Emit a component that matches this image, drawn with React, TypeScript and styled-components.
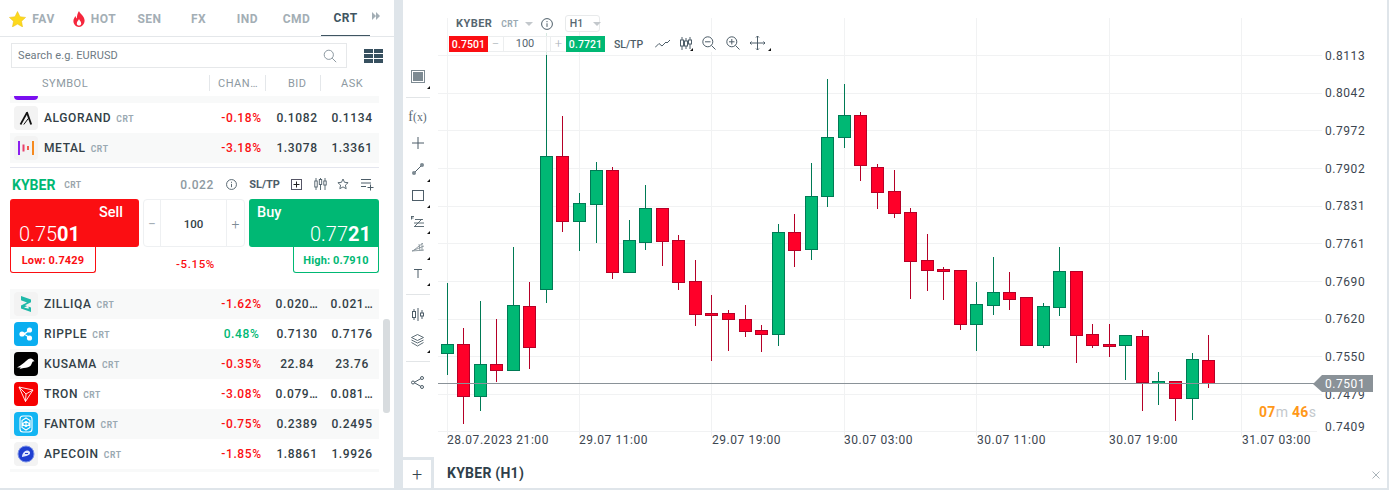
import React from "react";
import styled, { createGlobalStyle } from "styled-components";

const Global = createGlobalStyle`
  html, body { margin: 0; padding: 0; background: #dfe5ea; }
  #root { width: 1389px; height: 490px; overflow: hidden; }
  * { box-sizing: border-box; }
`;

const Page = styled.div`
  display: flex; width: 1389px; height: 490px; padding-bottom: 2px; gap: 9px; padding-right: 2px;
  font-family: Roboto, "Liberation Sans", sans-serif; background: #dfe5ea;
`;
const Side = styled.aside`
  width: 394px; flex: none; background: #fff; display: flex; flex-direction: column; position: relative;
`;
const Tabs = styled.nav`
  display: flex; height: 37px; border-bottom: 1px solid #e4e7ea; flex: none; position: relative;
`;
const Tab = styled.div<{ $w: number; $active?: boolean }>`
  width: ${p => p.$w}px; height: 36px; display: flex; align-items: center; justify-content: center; gap: 6px;
  font-size: 12px; font-weight: 700; letter-spacing: .5px; padding-top: 1px;
  color: ${p => (p.$active ? "#3f5562" : "#a3aeb5")};
  border-bottom: ${p => (p.$active ? "1px solid #3f5562" : "0")};
  margin-bottom: -1px;
  & > svg { flex: none; }
`;
const TabMore = styled.div`
  margin-left: 2px; height: 36px; display: flex; align-items: center; margin-top: -2px;
`;
const SearchRow = styled.div`
  display: flex; align-items: center; height: 31px; padding: 6px 0 0 11px; flex: none;
`;
const SearchBox = styled.div`
  width: 336px; height: 25px; border: 1px solid #e6e8ea; display: flex; align-items: center; justify-content: space-between;
  padding: 0 9px 0 6px; font-size: 11px; color: #6e7a83; letter-spacing: .1px;
`;
const ViewToggle = styled.div`
  margin-left: 17px; display: flex; margin-top: 0;
`;
const HeadRow = styled.div`
  display: flex; margin: 7px 0 5px 10px; height: 16px; flex: none; width: 369px;
  font-size: 11px; color: #8d99a1; letter-spacing: .5px; line-height: 18px;
`;
const HeadCell = styled.div<{ $w: number; $pad: number; $sep?: boolean }>`
  width: ${p => p.$w}px; padding-left: ${p => p.$pad}px;
  border-left: ${p => (p.$sep ? "1px solid #e4e7ea" : "0")}; white-space: nowrap;
`;
const List = styled.div`
  margin-left: 10px; width: 369px; height: 376px; overflow: hidden; flex: none;
`;
const Row = styled.div<{ $alt?: boolean; $clip?: number }>`
  display: grid; grid-template-columns: 204px 55px 56px 54px; align-items: center; height: 30px;
  background: ${p => (p.$alt ? "#f8f9f9" : "#fff")};
  margin-top: ${p => (p.$clip ? -p.$clip : 0)}px;
  font-size: 12px; font-weight: 500; letter-spacing: .62px; color: #333f47;
`;
const NameCell = styled.div`
  display: flex; align-items: center; padding-left: 4px; min-width: 0;
`;
const Logo = styled.div<{ $bg: string }>`
  width: 24px; height: 24px; border-radius: 4px; background: ${p => p.$bg}; flex: none; display: flex;
  align-items: center; justify-content: center; margin-right: 6px;
`;
const Tag = styled.span`
  font-size: 8.5px; font-weight: 700; color: #9aa9b2; margin-left: 5px; letter-spacing: .6px; position: relative; top: .5px;
`;
const Num = styled.div<{ $tone?: "up" | "down" }>`
  text-align: center; white-space: nowrap;
  color: ${p => (p.$tone === "up" ? "#00b874" : p.$tone === "down" ? "#fb0e12" : "inherit")};
`;
const Detail = styled.section`
  height: 122px; margin: 4px 0 0; border-top: 1px solid #e4e6ee; background: #fff;
`;
const DetailHead = styled.div`
  height: 31px; display: flex; align-items: center; position: relative; padding: 3px 0 0 2px;
`;
const Kyber = styled.span`
  font-size: 14px; font-weight: 700; color: #00b874;
`;
const KTag = styled.span`
  font-size: 8.5px; font-weight: 700; color: #9aa5ac; margin-left: 9px; letter-spacing: .3px;
`;
const Spread = styled.span`
  margin-left: 99px; width: 30px; font-size: 12px; font-weight: 500; color: #8d99a1; letter-spacing: .6px;
`;
const DetailTools = styled.div`
  margin-left: 16px; display: flex; align-items: center; height: 16px; margin-top: -2px;
`;
const SlTp = styled.span<{ $ml?: number }>`
  margin-left: ${p => p.$ml ?? 12}px; font-size: 11px; font-weight: 700; color: #4d5d68; letter-spacing: -.05px;
`;
const IconSlot = styled.span<{ $ml: number }>`
  margin-left: ${p => p.$ml}px; display: inline-flex;
`;
const Trade = styled.div`
  display: flex; height: 48px;
`;
const PriceBtn = styled.div<{ $buy?: boolean }>`
  width: ${p => (p.$buy ? 130 : 129)}px; height: 48px; border-radius: 3px 3px ${p => (p.$buy ? "0 3px" : "3px 0")};
  background: ${p => (p.$buy ? "#00b874" : "#fb0e12")}; color: #fff; padding: 4px 8px 0 8px;
  display: flex; flex-direction: column; align-items: ${p => (p.$buy ? "flex-start" : "flex-end")};
  ${p => (p.$buy ? "" : "padding-right: 16px; padding-left: 9px;")}
`;
const BtnLabel = styled.div`
  font-size: 14.5px; font-weight: 500; line-height: 20px;
`;
const BtnPrice = styled.div<{ $buy?: boolean }>`
  font-size: 20px; font-weight: 300; line-height: 22px; white-space: nowrap;
  align-self: ${p => (p.$buy ? "flex-end" : "flex-start")};
  & > b { font-weight: 700; }
`;
const Stepper = styled.div`
  margin: 0 4px; width: 102px; height: 48px; border: 1px solid #eef0f2; border-radius: 4px; display: grid;
  grid-template-columns: 16px 1fr 17px; align-items: stretch;
`;
const StepBtn = styled.div`
  display: flex; align-items: center; justify-content: center; color: #7d8b95; font-size: 14px; font-weight: 300; padding-top: 1px;
`;
const StepVal = styled.div`
  border-left: 1px solid #eef0f2; border-right: 1px solid #eef0f2; display: flex; align-items: center; justify-content: center;
  font-size: 11.5px; font-weight: 500; color: #333f47; padding-top: 1px;
`;
const Stats = styled.div`
  display: flex; align-items: flex-start; justify-content: space-between; height: 26px;
`;
const StatBox = styled.div<{ $up?: boolean }>`
  width: 86px; height: 26px; border: 1px solid ${p => (p.$up ? "#00b874" : "#fb0e12")}; border-top: 0; border-radius: 0 0 3px 3px;
  display: flex; align-items: center; justify-content: center; font-size: 11px; font-weight: 700; letter-spacing: .15px;
  color: ${p => (p.$up ? "#00b874" : "#fb0e12")}; padding-top: 1px;
`;
const DayChange = styled.div`
  margin-top: 10px; font-size: 11.5px; font-weight: 500; letter-spacing: .6px; color: #fb0e12; width: 60px; text-align: center; margin-left: 2px;
`;
const Scrollbar = styled.div`
  position: absolute; left: 383px; top: 319px; width: 7px; height: 94px; border-radius: 3px; background: #d8dcdf;
`;
const ChartPanel = styled.main`
  width: 984px; flex: none; background: #fff; display: flex; flex-direction: column;
`;
const ChartBody = styled.div`
  flex: 1; display: flex; min-height: 0;
`;
const Tools = styled.div`
  width: 35px; flex: none; padding-top: 63px; display: flex; flex-direction: column; align-items: stretch;
`;
const ToolItem = styled.div<{ $corner?: boolean }>`
  height: 26px; display: flex; align-items: center; justify-content: center; position: relative; padding-right: 6px; flex: none;
  font-family: "Liberation Serif", serif; font-size: 14px; color: #5c6b75;
  ${p => p.$corner ? `&::after { content: ""; position: absolute; right: 8px; bottom: 0; border-style: solid; border-width: 0 0 3px 3px; border-color: transparent transparent #111 transparent; }` : ""}
`;
const ToolSep = styled.div<{ $mb?: number }>`
  height: 1px; background: #e2e5e7; margin: 8px 8px ${p => p.$mb ?? 6}px 3px; flex: none;
`;
const Canvas = styled.div`
  flex: 1; position: relative; min-width: 0;
  & > svg { display: block; }
`;
const Float = styled.div`
  position: absolute; left: 11px; top: 15px; display: flex; flex-direction: column; gap: 4px;
`;
const FloatTop = styled.div`
  display: flex; align-items: center; height: 17px; padding-left: 7px;
`;
const FName = styled.span`
  font-size: 11px; font-weight: 700; color: #56666f; letter-spacing: .45px;
`;
const FTag = styled.span`
  font-size: 8.5px; font-weight: 700; color: #9aa9b2; margin-left: 9px; letter-spacing: .5px;
`;
const Caret = styled.span<{ $ml: number }>`
  margin-left: ${p => p.$ml}px; width: 0; height: 0; border-style: solid; border-width: 4px 4px 0 4px; border-color: #c3c8cc transparent transparent transparent; display: inline-block;
`;
const TfBox = styled.div`
  margin-left: 12px; width: 35px; height: 17px; border: 1px solid #e8eaeb; border-radius: 3px; display: flex; align-items: center; padding-left: 4px;
  font-size: 10.5px; font-weight: 500; color: #56666f; background: #fff;
`;
const FloatBottom = styled.div`
  display: flex; align-items: center; height: 16px; background: #fff;
`;
const MiniPrice = styled.div<{ $buy?: boolean }>`
  width: 39px; height: 16px; background: ${p => (p.$buy ? "#00b874" : "#fb0e12")}; color: #fff; font-size: 10.5px; font-weight: 500;
  display: flex; align-items: center; justify-content: center; letter-spacing: .1px;
`;
const MiniStep = styled.div`
  width: 78px; height: 16px; display: grid; grid-template-columns: 15px 44px 4px 15px; border-top: 1px solid #eceeef; border-bottom: 1px solid #eceeef;
  font-size: 11px; color: #56666f; align-items: center; text-align: center;
`;
const MiniSign = styled.span`
  color: #aab2b8; font-size: 13px; font-weight: 300; line-height: 14px;
`;
const MiniVal = styled.span`
  border-left: 1px solid #eceeef; border-right: 1px solid #eceeef; line-height: 14px;
`;
const MiniGap = styled.span`
  border-right: 1px solid #eceeef; height: 14px;
`;
const FSlTp = styled.span`
  margin-left: 9px; font-size: 10.5px; color: #4d5d68; font-weight: 500; letter-spacing: 0; width: 41px;
`;
const BottomBar = styled.footer`
  height: 31px; flex: none; display: flex; align-items: stretch; position: relative;
`;
const AddTab = styled.div`
  width: 31px; border-top: 3px solid #dfe5ea; border-right: 3px solid #dfe5ea; display: flex; align-items: center; justify-content: center;
  font-size: 18px; font-weight: 300; color: #37474f;
`;
const BarTitle = styled.div`
  margin-left: 13px; font-size: 14px; font-weight: 700; color: #2f3f4a; display: flex; align-items: center; letter-spacing: .25px; padding-top: 1px;
`;
const CloseX = styled.div`
  position: absolute; right: 7px; top: 14px; display: flex;
`;
const AxisLabel = styled.text`
  font-family: Roboto, "Liberation Sans", sans-serif; font-size: 12px; fill: #3c4650; letter-spacing: .55px;
`;
const TagLabel = styled(AxisLabel)`
  fill: #fff;
`;
const TimerText = styled.text`
  font-family: Roboto, "Liberation Sans", sans-serif; font-size: 14px; font-weight: 700; fill: #ff9819; letter-spacing: .3px;
  & > tspan { fill: #c3c8cc; font-weight: 400; }
`;

type C = [number, number, number, number, number, number];
// x, wickTop, wickBottom, bodyTop, bodyBottom, up=1/down=0
const candles: C[] = [
  [447.5,283,375,344,354,1],[463.5,328,424,344,397,0],[480.5,301,411,364,397,1],[496.5,319,382,364,371,0],
  [513.5,247,371,305,371,1],[529.5,282,369,306,348,0],[546.5,55,303,156,290,1],[562.5,116,232,156,222,0],
  [579.5,193,251,203,222,1],[596.5,162,243,170,205,1],[612.5,167,279,170,273,0],[629.5,220,273,240,273,1],
  [645.5,185,250,208,243,1],[662.5,208,266,208,242,0],[678.5,235,290,240,283,0],[695.5,260,326,281,315,0],
  [711.5,295,361,313,316,0],[728.5,310,351,313,320,0],[745.5,305,337,319,332,0],[761.5,325,352,330,335,0],
  [778.5,224,346,232,335,1],[794.5,214,267,232,251,0],[811.5,163,260,196,250,1],[827.5,79,207,137,197,1],
  [844.5,84,148,115,138,1],[860.5,112,181,115,166,0],[877.5,164,209,167,193,0],[894.5,170,218,191,214,0],
  [910.5,208,299,212,262,0],[927.5,234,291,260,271,0],[943.5,267,300,269,272,0],[960.5,270,330,270,325,0],
  [976.5,282,351,304,325,1],[993.5,257,315,292,306,1],[1009.5,272,310,292,300,0],[1026.5,297,346,297,346,0],
  [1043.5,303,348,306,346,1],[1059.5,247,316,271,308,1],[1076.5,271,363,271,336,0],[1092.5,324,348,334,346,0],
  [1109.5,324,357,344,347,0],[1125.5,335,380,335,346,1],[1142.5,330,411,336,383,0],[1158.5,372,405,381,384,1],
  [1175.5,381,421,381,399,0],[1192.5,353,420,359,399,1],[1208.5,335,388,360,384,0],
];
const hLines = [55, 93, 130, 168, 206, 243, 281, 319, 356, 394];
const vLines = [447, 579, 711, 844, 976, 1109, 1241];
const prices: [string, number][] = [
  ["0.8113",60],["0.8042",97],["0.7972",135],["0.7902",173],["0.7831",210],["0.7761",248],["0.7690",286],["0.7620",323],["0.7550",361],["0.7479",399],["0.7409",431],
];
const dates: [string, number][] = [
  ["28.07.2023 21:00",447],["29.07 11:00",579],["29.07 19:00",712],["30.07 03:00",844],["30.07 11:00",977],["30.07 19:00",1109],["31.07 03:00",1242],
];

const Chart = () => (
  <svg width="949" height="457" viewBox="438 0 949 457">
    {hLines.map(y => <line key={y} x1="438" x2="1322" y1={y + .5} y2={y + .5} stroke="#f1f2f3" />)}
    <line x1="438" x2="1317" y1="431.5" y2="431.5" stroke="#f1f2f3" />
    {vLines.map(x => <line key={x} x1={x + .5} x2={x + .5} y1="18" y2="436" stroke="#f1f2f3" />)}
    <line x1="546.5" x2="546.5" y1="33" y2="55" stroke="#d5e8e0" />
    {candles.map(([x, wt, wb, t, b, up]) => {
      const stroke = up ? "#007a55" : "#b50027";
      const fill = up ? "#00b874" : "#ff0029";
      return (
        <g key={x}>
          <line x1={x} x2={x} y1={wt} y2={wb} stroke={stroke} />
          <rect x={x - 6} y={t + .5} width="12" height={Math.max(b - t - 1, 1)} fill={fill} stroke={stroke} />
        </g>
      );
    })}
    <line x1="438" x2="1314" y1="383.5" y2="383.5" stroke="#8a9298" />
    {prices.map(([t, y]) => <AxisLabel key={t} x="1325" y={y}>{t}</AxisLabel>)}
    <polygon points="1313,384 1322,375 1373,375 1373,392 1322,392" fill="#8a9298" />
    <TagLabel x="1325" y="388">0.7501</TagLabel>
    {dates.map(([t, x]) => <AxisLabel key={t} x={x} y="444">{t}</AxisLabel>)}
    <TimerText x="1259" y="417">07<tspan>m</tspan> 46<tspan>s</tspan></TimerText>
  </svg>
);

const Star = () => (
  <svg width="17" height="16" viewBox="0 0 17 16"><path d="M8.5.5l2.5 5.2 5.6.7-4.1 3.9 1.1 5.6-5.1-2.8-5.1 2.8 1.1-5.6L.4 6.4 6 5.7z" fill="#fdd91d" stroke="#e9bf14" strokeWidth=".5" /></svg>
);
const Flame = () => (
  <svg width="12" height="16" viewBox="0 0 12 16"><path d="M6 0c.7 2.6 5.6 4.8 5.6 9.6C11.6 13.2 9 16 6 16S.4 13.200.4 10C.4 7.800 1.700 6.300 2.500 5c.2 1.300.7 2 1.400 2.400C3.800 4.500 4.800 2 6 0zm0 8c-.4 1.400-2.200 2.500-2.200 4.400 0 1.300 1 2.200 2.200 2.200s2.200-.9 2.200-2.200C8.200 10.500 6.400 9.400 6 8z" fill="#f5263c" fillRule="evenodd" /></svg>
);
const More = () => (
  <svg width="8" height="8" viewBox="0 0 8 8"><path d="M0 0l4 4-4 4zM4 0l4 4-4 4z" fill="#a3aeb5" /></svg>
);
const Search = () => (
  <svg width="14" height="14" viewBox="0 0 14 14" fill="none" stroke="#8d99a1"><circle cx="5.800" cy="5.800" r="4.600" /><path d="M9.200 9.200l4 4" /></svg>
);
const GridIco = () => (
  <svg width="19" height="14" viewBox="0 0 19 14" fill="#37505f"><path d="M0 0h9v4H0zM10 0h9v4h-9zM0 5h9v4H0zM10 5h9v4h-9zM0 10h9v4H0zM10 10h9v4h-9z" /></svg>
);
const Info = ({ s = 11 }: { s?: number }) => (
  <svg width={s} height={s} viewBox="0 0 12 12" fill="none" stroke="#4d5d68"><circle cx="6" cy="6" r="5.400" /><path d="M6 5.300v3.600" /><path d="M6 3v1.200" /></svg>
);
const BoxPlus = () => (
  <svg width="11" height="11" viewBox="0 0 11 11" fill="none" stroke="#222"><rect x=".5" y=".5" width="10" height="10" stroke="#556" /><path d="M5.500 2.500v6M2.500 5.500h6" /></svg>
);
const CandleIco = () => (
  <svg width="13" height="12" viewBox="0 0 13 12" fill="none" stroke="#4d5d68" strokeWidth=".9"><path d="M2 0v12M6.500 0v12M11 0v12" /><rect x=".8" y="3" width="2.400" height="6" fill="#fff" /><rect x="5.300" y="1.500" width="2.400" height="5" fill="#fff" /><rect x="9.800" y="3" width="2.400" height="4" fill="#fff" /></svg>
);
const StarLine = () => (
  <svg width="12" height="12" viewBox="0 0 12 12"><path d="M6 1l1.500 3.300 3.600.4-2.700 2.400.8 3.600L6 8.900l-3.200 1.800.8-3.600L.9 4.700l3.600-.4z" fill="none" stroke="#4d5d68" strokeWidth=".9" /></svg>
);
const ListPlus = () => (
  <svg width="13" height="13" viewBox="0 0 13 13" fill="none" stroke="#4d5d68"><path d="M0 1.500h10M0 5h10M0 8.500h5M9.500 6.500v6M6.500 9.500h6" /></svg>
);
const Ic = styled.svg`
  fill: none; stroke: #4d5d68; display: block;
`;

const Algorand = () => (
  <svg width="14" height="14" viewBox="0 0 14 14" fill="none" stroke="#111"><path d="M1.500 13.500L7.800 2" strokeWidth="1.700" /><path d="M7.800 1l4.400 12.500" strokeWidth="1.900" /><path d="M4.800 13.500l4.500-6" strokeWidth="1" /></svg>
);
const Metal = () => (
  <svg width="16" height="14" viewBox="0 0 16 14"><rect x="0" width="2" height="14" fill="#8b1ff0" /><rect x="4.500" y="3.500" width="2" height="7" fill="#e8416c" /><rect x="9" y="5" width="2" height="4" fill="#f25a4d" /><rect x="14" width="2" height="14" fill="#f68a1f" /></svg>
);
const Zil = () => (
  <svg width="12" height="16" viewBox="0 0 12 16"><path d="M1 0l10 3.500v2.800L5 9.300l6 2.200V16L1 12.500v-3l6-3-6-2.200z" fill="#1fb9a9" /><path d="M4 11.600l4.600-2.200v3.400z" fill="#f4f4f4" /></svg>
);
const Ripple = () => (
  <svg width="14" height="14" viewBox="0 0 14 14" fill="#fff"><circle cx="3" cy="7" r="2.600" /><circle cx="10.500" cy="3" r="2.600" /><circle cx="10.500" cy="11" r="2.600" /><path d="M3 7c3 0 5-1.500 7.500-4M3 7c3 0 5 1.500 7.500 4" stroke="#fff" strokeWidth="1.200" fill="none" /></svg>
);
const Kusama = () => (
  <svg width="18" height="12" viewBox="0 0 18 12"><path d="M17.500 3.300C16.600 2.500 15.800.8 14 .5c-2-.3-3.500 1.300-5 2.600C7 5 4.500 7.300 0 9.500c2.200-.1 3-.1 4 .3-.6.400-1 .7-1.600 1.400 1.600-.6 2.600-1 4.400-1.200 3.200-.3 5.600-.8 7-2.600 1-1.400 1.200-2.900 2-3.800z" fill="#fff" /></svg>
);
const Tron = () => (
  <svg width="16" height="16" viewBox="0 0 16 16" fill="none" stroke="#fff" strokeWidth=".9" strokeLinejoin="round"><path d="M1 1l14 3-7.500 11.500zM1 1l7 7 7-4M8 8l-.5 7.500" /></svg>
);
const Fantom = () => (
  <svg width="14" height="18" viewBox="0 0 14 18" fill="none" stroke="#fff" strokeWidth="1.100"><rect x="1" y="1" width="12" height="16" rx="3" /><path d="M7 3l4 2.500v3.500L7 6.500 3 9V5.500zM3 9l4 2.500L11 9v3.500L7 15l-4-2.500zM7 6.500v5" /></svg>
);
const Ape = () => (
  <svg width="18" height="18" viewBox="0 0 18 18"><circle cx="9" cy="9" r="8" fill="#1f3fd1" /><circle cx="9" cy="9" r="8" fill="none" stroke="#7d93e8" strokeWidth="1" /><path d="M5 12c0-3 2-6 5-6.500 2-.2 3.500 1.200 3 3-.4 1.500-2 2-3.500 2.400-1.500.4-3 .8-4.500 1.100z" fill="#dfe6ff" /><path d="M8 8.500h3" stroke="#1f3fd1" strokeWidth="1" /></svg>
);

type R = { logo: React.ReactNode; bg: string; name: string; chg: string; up?: boolean; bid: string; ask: string };
const rows: R[] = [
  { logo: <Zil />, bg: "#f3f3f3", name: "ZILLIQA", chg: "-1.62%", bid: "0.020…", ask: "0.021…" },
  { logo: <Ripple />, bg: "#0aaef0", name: "RIPPLE", chg: "0.48%", up: true, bid: "0.7130", ask: "0.7176" },
  { logo: <Kusama />, bg: "#000", name: "KUSAMA", chg: "-0.35%", bid: "22.84", ask: "23.76" },
  { logo: <Tron />, bg: "#f60000", name: "TRON", chg: "-3.08%", bid: "0.079…", ask: "0.081…" },
  { logo: <Fantom />, bg: "#13b5f2", name: "FANTOM", chg: "-0.75%", bid: "0.2389", ask: "0.2495" },
  { logo: <Ape />, bg: "#f3f3f3", name: "APECOIN", chg: "-1.85%", bid: "1.8861", ask: "1.9926" },
];

const MarketRow = ({ r, alt }: { r: R; alt: boolean }) => (
  <Row $alt={alt}>
    <NameCell><Logo $bg={r.bg}>{r.logo}</Logo>{r.name}<Tag>CRT</Tag></NameCell>
    <Num $tone={r.up ? "up" : "down"}>{r.chg}</Num>
    <Num>{r.bid}</Num>
    <Num>{r.ask}</Num>
  </Row>
);

const FloatIcons = styled.div`
  display: flex; align-items: center; width: 125px; height: 16px; position: relative; gap: 10px; margin-top: -2px;
`;
const Mark = styled.span<{ $left: number }>`
  position: absolute; left: ${p => p.$left}px; width: 0; height: 0; border-style: solid; border-width: 0 0 3px 3px; border-color: transparent transparent #111 transparent; bottom: 0;
`;

export default function App() {
  return (
    <Page>
      <Global />
      <Side>
        <Tabs>
          <Tab $w={64}><Star />FAV</Tab>
          <Tab $w={61}><Flame />HOT</Tab>
          <Tab $w={49}>SEN</Tab>
          <Tab $w={49}>FX</Tab>
          <Tab $w={49}>IND</Tab>
          <Tab $w={49}>CMD</Tab>
          <Tab $w={49} $active>CRT</Tab>
          <TabMore><More /></TabMore>
        </Tabs>
        <SearchRow>
          <SearchBox>Search e.g. EURUSD<Search /></SearchBox>
          <ViewToggle><GridIco /></ViewToggle>
        </SearchRow>
        <HeadRow>
          <HeadCell $w={199} $pad={32}>SYMBOL</HeadCell>
          <HeadCell $w={56} $pad={8} $sep>CHAN…</HeadCell>
          <HeadCell $w={55} $pad={22} $sep>BID</HeadCell>
          <HeadCell $w={59} $pad={20} $sep>ASK</HeadCell>
        </HeadRow>
        <List>
          <Row $alt $clip={23}><NameCell><Logo $bg="#7a0ff0" /></NameCell></Row>
          <Row>
            <NameCell><Logo $bg="#f3f3f3"><Algorand /></Logo>ALGORAND<Tag>CRT</Tag></NameCell>
            <Num $tone="down">-0.18%</Num><Num>0.1082</Num><Num>0.1134</Num>
          </Row>
          <Row $alt>
            <NameCell><Logo $bg="#f3f3f3"><Metal /></Logo>METAL<Tag>CRT</Tag></NameCell>
            <Num $tone="down">-3.18%</Num><Num>1.3078</Num><Num>1.3361</Num>
          </Row>
          <Detail>
            <DetailHead>
              <Kyber>KYBER</Kyber><KTag>CRT</KTag>
              <Spread>0.022</Spread>
              <DetailTools>
                <Info />
                <SlTp>SL/TP</SlTp>
                <IconSlot $ml={11}><BoxPlus /></IconSlot>
                <IconSlot $ml={12}><CandleIco /></IconSlot>
                <IconSlot $ml={10}><StarLine /></IconSlot>
                <IconSlot $ml={12}><ListPlus /></IconSlot>
              </DetailTools>
            </DetailHead>
            <Trade>
              <PriceBtn>
                <BtnLabel>Sell</BtnLabel>
                <BtnPrice>0.75<b>01</b></BtnPrice>
              </PriceBtn>
              <Stepper>
                <StepBtn>−</StepBtn>
                <StepVal>100</StepVal>
                <StepBtn>+</StepBtn>
              </Stepper>
              <PriceBtn $buy>
                <BtnLabel>Buy</BtnLabel>
                <BtnPrice $buy>0.77<b>21</b></BtnPrice>
              </PriceBtn>
            </Trade>
            <Stats>
              <StatBox>Low: 0.7429</StatBox>
              <DayChange>-5.15%</DayChange>
              <StatBox $up>High: 0.7910</StatBox>
            </Stats>
          </Detail>
          {rows.map((r, i) => <MarketRow key={r.name} r={r} alt={i % 2 === 0} />)}
          <Row $alt><NameCell><Logo $bg="#1296e0" /></NameCell></Row>
        </List>
        <Scrollbar />
      </Side>
      <ChartPanel>
        <ChartBody>
          <Tools>
            <ToolItem $corner>
              <Ic width="14" height="13" viewBox="0 0 14 13"><rect x=".5" y=".5" width="13" height="12" stroke="#7d8a92" /><rect x="2" y="2" width="10" height="9" fill="#7d8a92" stroke="none" /></Ic>
            </ToolItem>
            <ToolSep />
            <ToolItem>f<small>(x)</small></ToolItem>
            <ToolItem><Ic width="12" height="12" viewBox="0 0 12 12"><path d="M6 0v12M0 6h12" /></Ic></ToolItem>
            <ToolItem $corner><Ic width="12" height="12" viewBox="0 0 12 12" stroke="#7d8a92"><path d="M2 10l8-8" /><circle cx="2" cy="10" r="2" fill="#7d8a92" stroke="none" /><circle cx="10" cy="2" r="2" fill="#7d8a92" stroke="none" /></Ic></ToolItem>
            <ToolItem $corner><Ic width="12" height="11" viewBox="0 0 12 11"><rect x=".5" y=".5" width="11" height="10" /></Ic></ToolItem>
            <ToolItem $corner><Ic width="13" height="11" viewBox="0 0 13 11" strokeWidth=".9"><path d="M0 .5h3M.5 .5v3M.5 2h2M4 3.500h8M3 10.500h10M3 7h10M4 10l7-7" /></Ic></ToolItem>
            <ToolItem $corner><Ic width="12" height="9" viewBox="0 0 12 9" strokeWidth=".8"><path d="M0 8l12-5M0 8l12-1M2 7l9-7M7 1l1 7M10 0l0 8" stroke="#7d8a92" /></Ic></ToolItem>
            <ToolItem $corner><Ic width="8" height="9" viewBox="0 0 8 9"><path d="M0 .5h8M4 .5V9" /></Ic></ToolItem>
            <ToolSep />
            <ToolItem><Ic width="12" height="13" viewBox="0 0 12 13"><path d="M2 1v11M6 0v13M10 2v9" /><rect x=".5" y="3.500" width="3" height="6" fill="#fff" /><rect x="8.500" y="5" width="3" height="3" fill="#fff" /></Ic></ToolItem>
            <ToolItem $corner><Ic width="13" height="13" viewBox="0 0 13 13" strokeWidth=".9" stroke="#7d8a92"><path d="M6.500 .5l6 3-6 3-6-3zM.5 6l6 3 6-3M.5 8.500l6 3.500 6-3.500" /></Ic></ToolItem>
            <ToolSep $mb={7} />
            <ToolItem><Ic width="13" height="13" viewBox="0 0 13 13" stroke="#7d8a92"><path d="M3 6.500l7-4M3 6.500l7 4" /><circle cx="2" cy="6.500" r="1.500" fill="#fff" /><circle cx="11" cy="2" r="1.500" fill="#fff" /><circle cx="11" cy="11" r="1.500" fill="#fff" /></Ic></ToolItem>
          </Tools>
          <Canvas>
            <Chart />
            <Float>
              <FloatTop>
                <FName>KYBER</FName><FTag>CRT</FTag><Caret $ml={6} />
                <IconSlot $ml={8}><Info s={12} /></IconSlot>
                <TfBox>H1<Caret $ml={10} /></TfBox>
              </FloatTop>
              <FloatBottom>
                <MiniPrice>0.7501</MiniPrice>
                <MiniStep><MiniSign>−</MiniSign><MiniVal>100</MiniVal><MiniGap /><MiniSign>+</MiniSign></MiniStep>
                <MiniPrice $buy>0.7721</MiniPrice>
                <FSlTp>SL/TP</FSlTp>
                <FloatIcons>
                  <Ic width="15" height="9" viewBox="0 0 15 9"><path d="M0 8.500l4-4 3 2.500 4-4 1 1 3-3" /></Ic>
                  <Ic width="12" height="13" viewBox="0 0 12 13"><path d="M2 0v13M6 1v11M10 0v12" /><rect x=".5" y="3" width="3" height="6" fill="#fff" /><rect x="4.500" y="4" width="3" height="5" fill="#fff" /><rect x="8.500" y="3" width="3" height="4" fill="#fff" /></Ic>
                  <Ic width="14" height="14" viewBox="0 0 14 14"><circle cx="5.800" cy="5.800" r="5" /><path d="M3 5.800h5.500M9.500 9.500l4 4" /></Ic>
                  <Ic width="14" height="14" viewBox="0 0 14 14"><circle cx="5.800" cy="5.800" r="5" /><path d="M3 5.800h5.500M5.800 3v5.500M9.500 9.500l4 4" /></Ic>
                  <Ic width="15" height="14" viewBox="0 0 15 14"><path d="M7.500 0v14M0 7h15M6 1.500L7.500 0 9 1.500M6 12.500L7.500 14 9 12.500M1.500 5.500L0 7l1.500 1.500M13.500 5.500L15 7l-1.500 1.500" /></Ic>
                  <Mark $left={35} />
                  <Mark $left={113} />
                </FloatIcons>
              </FloatBottom>
            </Float>
          </Canvas>
        </ChartBody>
        <BottomBar>
          <AddTab>+</AddTab>
          <BarTitle>KYBER (H1)</BarTitle>
          <CloseX><svg width="8" height="8" viewBox="0 0 8 8" stroke="#aab4ba"><path d="M.5.500l7 7M7.500.500l-7 7" /></svg></CloseX>
        </BottomBar>
      </ChartPanel>
    </Page>
  );
}
